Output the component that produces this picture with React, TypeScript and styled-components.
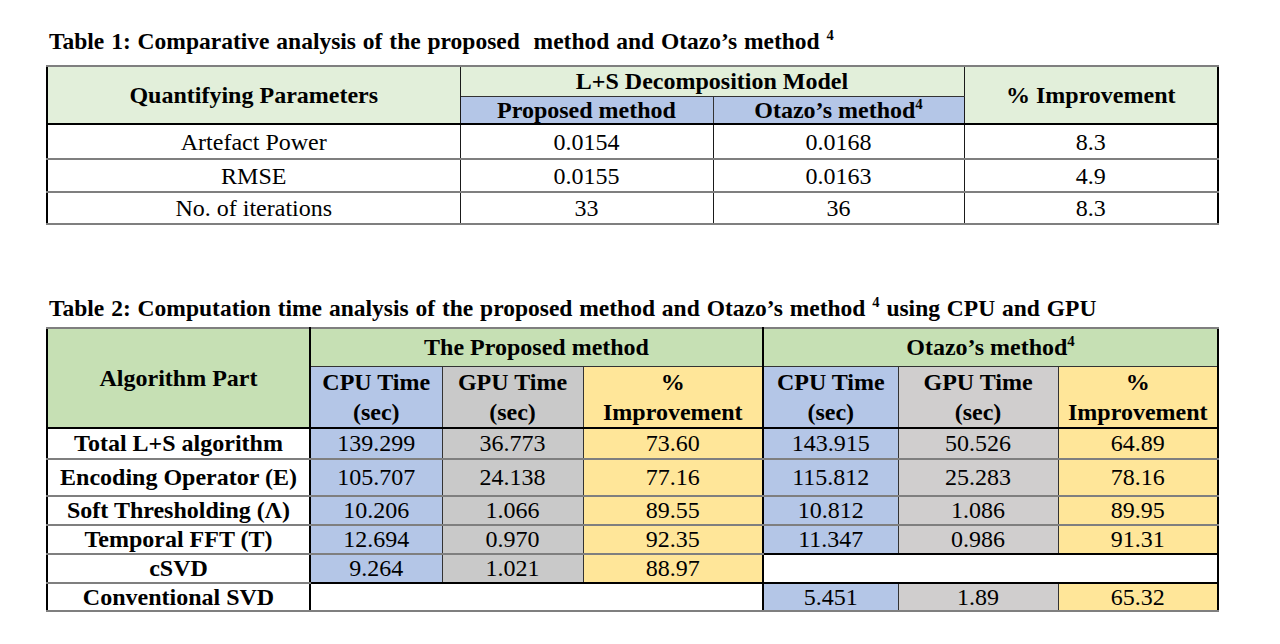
import React from "react";
import styled, { createGlobalStyle } from "styled-components";

const Global = createGlobalStyle`
  html, body { margin: 0; padding: 0; background: #ffffff; }
  body { font-family: "Liberation Serif", "Times New Roman", serif; color: #000; }
`;

const Page = styled.div`
  display: flex;
  flex-direction: column;
  padding: 29px 0 0 46px;
  width: 1234px;
  height: 644px;
  box-sizing: border-box;
  background: #fff;
`;

const Title = styled.div<{ $mt?: number; $mb?: number }>`
  font-weight: bold;
  font-size: 23.5px;
  line-height: 24px;
  height: 24px;
  margin-left: 3px;
  margin-top: ${(p) => p.$mt ?? 0}px;
  margin-bottom: ${(p) => p.$mb ?? 0}px;
  word-spacing: 1px;
  white-space: nowrap;
`;

const Sup = styled.sup`
  font-size: 0.62em;
  vertical-align: 0.6em;
  line-height: 0;
`;

const Table = styled.table`
  width: 1171px;
  border-collapse: collapse;
  table-layout: fixed;
  border: 2.5px solid #000;
  font-size: 24px;
`;

const Row = styled.tr<{ $h: number }>`
  height: ${(p) => p.$h}px;
`;

type CellProps = {
  $bg?: string;
  $bold?: boolean;
  $bt?: string;
  $bb?: string;
  $bl?: string;
  $br?: string;
  $lh?: number;
};

const Cell = styled.td<CellProps>`
  padding: 0;
  text-align: center;
  vertical-align: middle;
  background: ${(p) => p.$bg ?? "#fff"};
  font-weight: ${(p) => (p.$bold ? "bold" : "normal")};
  line-height: ${(p) => p.$lh ?? 26}px;
  white-space: nowrap;
  border-top: ${(p) => p.$bt ?? "2px solid #7f7f7f"};
  border-bottom: ${(p) => p.$bb ?? "2px solid #7f7f7f"};
  border-left: ${(p) => p.$bl ?? "1.5px solid #1a1a1a"};
  border-right: ${(p) => p.$br ?? "1.5px solid #1a1a1a"};
`;

const GREEN1 = "#e2efda";
const GREEN2 = "#c6e0b4";
const BLUE = "#b4c6e7";
const GRAY1 = "#c9c9c9";
const GRAY2 = "#d0cece";
const YELLOW = "#ffe699";
const HEADER_LINE = "2.5px solid #000";
const THIN = "1px solid #333";

const t1Rows = [
  ["Artefact Power", "0.0154", "0.0168", "8.3", 35],
  ["RMSE", "0.0155", "0.0163", "4.9", 33],
  ["No. of iterations", "33", "36", "8.3", 32],
] as const;

type T2Row = {
  label: string;
  p?: [string, string, string];
  o?: [string, string, string];
  h: number;
};

const t2Rows: T2Row[] = [
  { label: "Total L+S algorithm", p: ["139.299", "36.773", "73.60"], o: ["143.915", "50.526", "64.89"], h: 31 },
  { label: "Encoding Operator (E)", p: ["105.707", "24.138", "77.16"], o: ["115.812", "25.283", "78.16"], h: 37 },
  { label: "Soft Thresholding (Λ)", p: ["10.206", "1.066", "89.55"], o: ["10.812", "1.086", "89.95"], h: 29 },
  { label: "Temporal FFT (T)", p: ["12.694", "0.970", "92.35"], o: ["11.347", "0.986", "91.31"], h: 29 },
  { label: "cSVD", p: ["9.264", "1.021", "88.97"], h: 29 },
  { label: "Conventional SVD", o: ["5.451", "1.89", "65.32"], h: 28 },
];

const colors1 = [BLUE, GRAY1, YELLOW];
const colors2 = [BLUE, GRAY2, YELLOW];

export default function App() {
  return (
    <>
      <Global />
      <Page>
        <Title $mb={12}>
          Table 1: Comparative analysis of the proposed&nbsp; method and Otazo’s method <Sup>4</Sup>
        </Title>
        <Table>
          <colgroup>
            <col style={{ width: 413 }} />
            <col style={{ width: 253 }} />
            <col style={{ width: 251 }} />
            <col style={{ width: 254 }} />
          </colgroup>
          <tbody>
            <Row $h={30}>
              <Cell as="th" rowSpan={2} $bg={GREEN1} $bold $bb={HEADER_LINE}>
                Quantifying Parameters
              </Cell>
              <Cell as="th" colSpan={2} $bg={GREEN1} $bold $bb={THIN}>
                L+S Decomposition Model
              </Cell>
              <Cell as="th" rowSpan={2} $bg={GREEN1} $bold $bb={HEADER_LINE}>
                % Improvement
              </Cell>
            </Row>
            <Row $h={28}>
              <Cell as="th" $bg={BLUE} $bold $bt={THIN} $bb={HEADER_LINE} $br={THIN}>
                Proposed method
              </Cell>
              <Cell as="th" $bg={BLUE} $bold $bt={THIN} $bb={HEADER_LINE} $bl={THIN}>
                Otazo’s method<Sup>4</Sup>
              </Cell>
            </Row>
            {t1Rows.map(([a, b, c, d, h], i) => (
              <Row key={a} $h={h}>
                <Cell $bt={i === 0 ? HEADER_LINE : undefined}>{a}</Cell>
                <Cell $bt={i === 0 ? HEADER_LINE : undefined}>{b}</Cell>
                <Cell $bt={i === 0 ? HEADER_LINE : undefined} $bl={THIN}>{c}</Cell>
                <Cell $bt={i === 0 ? HEADER_LINE : undefined}>{d}</Cell>
              </Row>
            ))}
          </tbody>
        </Table>

        <Title $mt={71} $mb={7}>
          Table 2: Computation time analysis of the proposed method and Otazo’s method <Sup>4</Sup> using CPU and GPU
        </Title>
        <Table>
          <colgroup>
            <col style={{ width: 263 }} />
            <col style={{ width: 132 }} />
            <col style={{ width: 141 }} />
            <col style={{ width: 180 }} />
            <col style={{ width: 135 }} />
            <col style={{ width: 160 }} />
            <col style={{ width: 160 }} />
          </colgroup>
          <tbody>
            <Row $h={38}>
              <Cell as="th" rowSpan={2} $bg={GREEN2} $bold $bb={HEADER_LINE} $br={HEADER_LINE}>
                Algorithm Part
              </Cell>
              <Cell as="th" colSpan={3} $bg={GREEN2} $bold $bb={THIN} $bl={HEADER_LINE} $br={HEADER_LINE}>
                The Proposed method
              </Cell>
              <Cell as="th" colSpan={3} $bg={GREEN2} $bold $bb={THIN} $bl={HEADER_LINE}>
                Otazo’s method<Sup>4</Sup>
              </Cell>
            </Row>
            <Row $h={61}>
              {[0, 1].flatMap((g) =>
                ["CPU Time", "GPU Time", "%"].map((lbl, k) => (
                  <Cell
                    as="th"
                    key={`${g}-${k}`}
                    $bg={(g === 0 ? colors1 : colors2)[k]}
                    $bold
                    $lh={30}
                    $bt={THIN}
                    $bb={HEADER_LINE}
                    $bl={k === 0 ? HEADER_LINE : THIN}
                    $br={k === 2 && g === 0 ? HEADER_LINE : THIN}
                  >
                    {lbl}
                    <br />
                    {k === 2 ? "Improvement" : "(sec)"}
                  </Cell>
                ))
              )}
            </Row>
            {t2Rows.map((r, i) => {
              const bt = i === 0 ? HEADER_LINE : undefined;
              return (
                <Row key={r.label} $h={r.h}>
                  <Cell $bold $bt={bt} $br={HEADER_LINE}>
                    {r.label}
                  </Cell>
                  {r.p ? (
                    r.p.map((v, k) => (
                      <Cell
                        key={`p${k}`}
                        $bg={colors1[k]}
                        $bt={bt}
                        $bl={k === 0 ? HEADER_LINE : THIN}
                        $br={k === 2 ? HEADER_LINE : THIN}
                        $bb={i === 4 ? HEADER_LINE : undefined}
                      >
                        {v}
                      </Cell>
                    ))
                  ) : (
                    <Cell colSpan={3} $bt={HEADER_LINE} $bl={HEADER_LINE} $br={HEADER_LINE} />
                  )}
                  {r.o ? (
                    r.o.map((v, k) => (
                      <Cell
                        key={`o${k}`}
                        $bg={colors2[k]}
                        $bt={i === 5 ? HEADER_LINE : bt}
                        $bl={k === 0 ? HEADER_LINE : THIN}
                        $br={THIN}
                        $bb={i === 3 ? HEADER_LINE : undefined}
                      >
                        {v}
                      </Cell>
                    ))
                  ) : (
                    <Cell colSpan={3} $bt={HEADER_LINE} $bb={HEADER_LINE} $bl={HEADER_LINE} />
                  )}
                </Row>
              );
            })}
          </tbody>
        </Table>
      </Page>
    </>
  );
}
